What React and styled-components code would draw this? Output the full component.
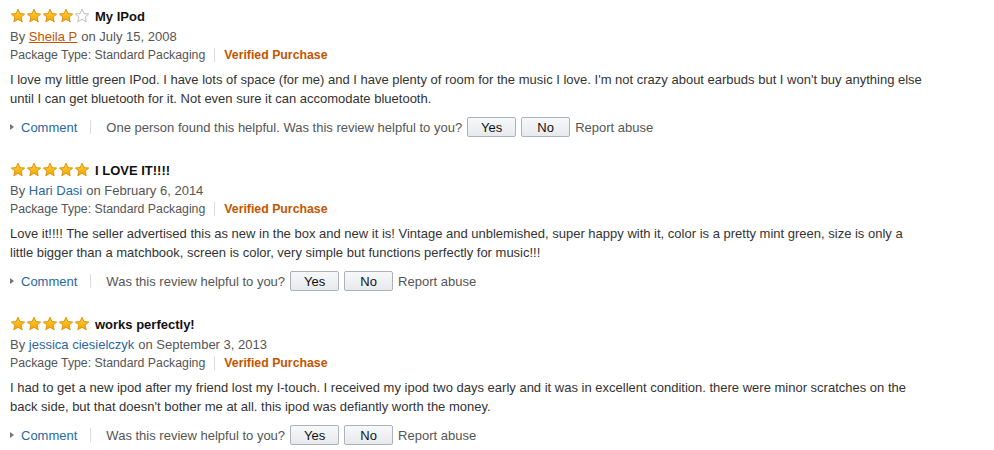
import React from 'react'
import styled, { createGlobalStyle } from 'styled-components'

const GlobalStyle = createGlobalStyle`
  body {
    margin: 0;
    background: #fff;
    font-family: "Liberation Sans", Arial, sans-serif;
    color: #333;
  }
`

const List = styled.div`
  padding: 6px 0 0 10px;
  width: 912px;
`

const Review = styled.div`
  margin-bottom: 22px;
`

const TitleRow = styled.div`
  display: flex;
  align-items: center;
  gap: 5px;
  height: 20px;
`

const Stars = styled.span`
  display: flex;
`

const Title = styled.span`
  font-size: 13px;
  font-weight: bold;
  color: #111;
`

const Byline = styled.div`
  font-size: 13px;
  color: #555;
  line-height: 18px;
  margin-top: 2px;
`

const Author = styled.a`
  color: ${(p) => (p.$hover ? '#c45500' : '#2a67a0')};
  text-decoration: ${(p) => (p.$hover ? 'underline' : 'none')};
  margin-right: 4px;
`

const Meta = styled.div`
  display: flex;
  align-items: center;
  font-size: 12.3px;
  color: #555;
  line-height: 18px;
`

const Divider = styled.span`
  width: 1px;
  height: 14px;
  background: #ddd;
  margin: 0 9px 0 9px;
`

const Verified = styled.span`
  color: #c45500;
  font-weight: bold;
`

const Body = styled.p`
  margin: 6px 0 0;
  font-size: 13px;
  line-height: 19px;
  color: #333;
`

const Actions = styled.div`
  display: flex;
  align-items: center;
  font-size: 13px;
  color: #555;
  margin-top: 8px;
  height: 22px;
`

const CommentLink = styled.a`
  display: flex;
  align-items: center;
  color: #2a67a0;
  &::before {
    content: '';
    border-left: 4px solid #777;
    border-top: 3px solid transparent;
    border-bottom: 3px solid transparent;
    margin-right: 7px;
  }
`

const ActionDivider = styled.span`
  width: 1px;
  height: 14px;
  background: #ddd;
  margin: 0 15px 0 13px;
`

const VoteButton = styled.button`
  font-family: inherit;
  font-size: 13px;
  color: #111;
  height: 20px;
  width: 49px;
  padding: 0;
  margin-left: 5px;
  border: 1px solid #adb1b8;
  border-radius: 2px;
  background: linear-gradient(#f7f8fa, #e7e9ec);
`

const Report = styled.span`
  margin-left: 5px;
`

const Star = ({ filled }) => (
  <svg width="16" height="16" viewBox="0 0 16 16">
    <defs>
      <linearGradient id="sg" x1="0" y1="0" x2="0" y2="1">
        <stop offset="0" stopColor="#ffd23c" />
        <stop offset="1" stopColor="#f4a300" />
      </linearGradient>
    </defs>
    <path
      d="M8 1.2 L9.9 5.6 L14.7 6 L11.1 9.1 L12.2 13.8 L8 11.3 L3.8 13.8 L4.9 9.1 L1.3 6 L6.1 5.6 Z"
      fill={filled ? 'url(#sg)' : '#fff'}
      stroke={filled ? '#d98c00' : '#b5b5b5'}
      strokeWidth="0.9"
      strokeLinejoin="round"
    />
  </svg>
)

const reviews = [
  {
    rating: 4,
    title: 'My IPod',
    author: 'Sheila P',
    hover: true,
    date: 'July 15, 2008',
    body: "I love my little green IPod. I have lots of space (for me) and I have plenty of room for the music I love. I'm not crazy about earbuds but I won't buy anything else until I can get bluetooth for it. Not even sure it can accomodate bluetooth.",
    helpful: 'One person found this helpful. ',
  },
  {
    rating: 5,
    title: 'I LOVE IT!!!!',
    author: 'Hari Dasi',
    date: 'February 6, 2014',
    body: 'Love it!!!! The seller advertised this as new in the box and new it is! Vintage and unblemished, super happy with it, color is a pretty mint green, size is only a little bigger than a matchbook, screen is color, very simple but functions perfectly for music!!!',
    helpful: '',
  },
  {
    rating: 5,
    title: 'works perfectly!',
    author: 'jessica ciesielczyk',
    date: 'September 3, 2013',
    body: "I had to get a new ipod after my friend lost my I-touch. I received my ipod two days early and it was in excellent condition. there were minor scratches on the back side, but that doesn't bother me at all. this ipod was defiantly worth the money.",
    helpful: '',
  },
]

export default function App() {
  return (
    <>
      <GlobalStyle />
      <List>
        {reviews.map((r) => (
          <Review key={r.title}>
            <TitleRow>
              <Stars>
                {[0, 1, 2, 3, 4].map((i) => (
                  <Star key={i} filled={i < r.rating} />
                ))}
              </Stars>
              <Title>{r.title}</Title>
            </TitleRow>
            <Byline>
              By <Author $hover={r.hover}>{r.author}</Author>on {r.date}
            </Byline>
            <Meta>
              Package Type: Standard Packaging
              <Divider />
              <Verified>Verified Purchase</Verified>
            </Meta>
            <Body>{r.body}</Body>
            <Actions>
              <CommentLink>Comment</CommentLink>
              <ActionDivider />
              {r.helpful}Was this review helpful to you?
              <VoteButton>Yes</VoteButton>
              <VoteButton>No</VoteButton>
              <Report>Report abuse</Report>
            </Actions>
          </Review>
        ))}
      </List>
    </>
  )
}
